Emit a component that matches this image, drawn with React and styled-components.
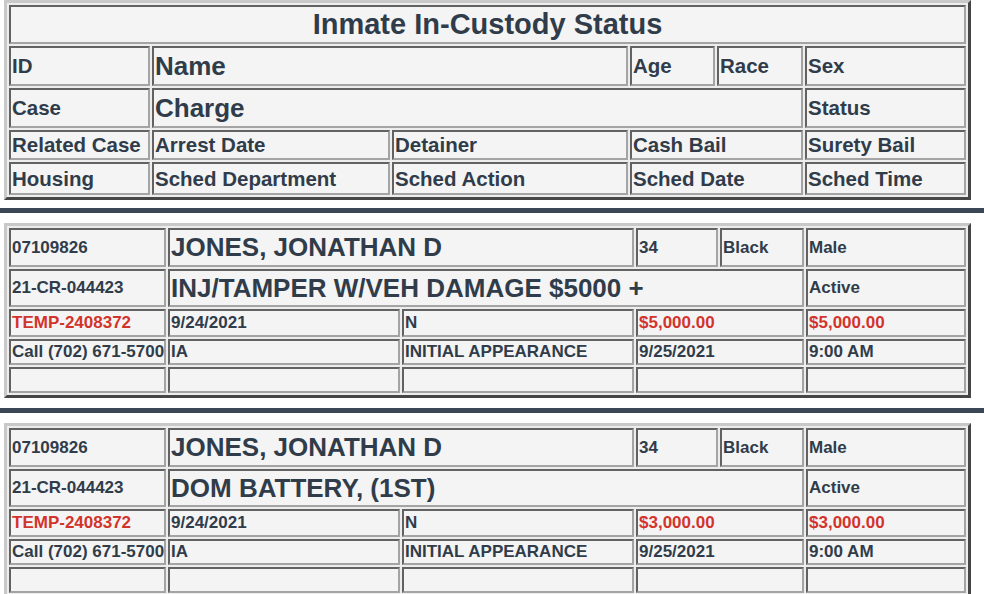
import React, { Fragment } from 'react';
import styled, { createGlobalStyle } from 'styled-components';

//global
const GlobalStyle = createGlobalStyle`
  html, body {
    margin: 0;
    padding: 0;
    background: #ffffff;
  }
  body {
    font-family: "Liberation Sans", Arial, Helvetica, sans-serif;
    color: #2f3b4a;
  }
`;

//layout
const Page = styled.div`
  width: 984px;
  overflow: hidden;
`;

const Panel = styled.div`
  display: grid;
  grid-template-columns: ${(p) => p.cols};
  grid-template-rows: ${(p) => p.rows};
  gap: 2px;
  width: 957px;
  margin-left: 4px;
  padding: 2px;
  border: 3px solid;
  border-color: #c9c9c9 #464646 #464646 #c9c9c9;
  background: #ededed;
`;

const Cell = styled.div`
  grid-column: span ${(p) => p.span || 1};
  display: flex;
  align-items: center;
  justify-content: ${(p) => (p.center ? 'center' : 'flex-start')};
  box-sizing: border-box;
  padding: 0 1px;
  border: 2px solid;
  border-color: #626262 #a4a4a4 #a4a4a4 #626262;
  background: #f4f4f4;
  color: ${(p) => (p.red ? '#d2342b' : '#303c4a')};
  font-weight: bold;
  font-size: ${(p) => p.size || 17}px;
  white-space: nowrap;
  overflow: hidden;
`;

const Divider = styled.div`
  height: 5px;
  background: #3c4755;
  margin: ${(p) => p.top}px 0 10px 0;
`;

const HEAD_COLS = '141px 238px 236px 85px 86px 161px';
const HEAD_ROWS = '39px 40px 40px 30px 33px';
const REC_COLS = '157px 232px 232px 82px 84px 160px';
const REC_ROWS = '39px 38px 28px 26px 26px';

const LABEL = 20.5;
const BIG = 26;

const records = [
  {
    id: '07109826',
    name: 'JONES, JONATHAN D',
    age: '34',
    race: 'Black',
    sex: 'Male',
    caseNo: '21-CR-044423',
    charge: 'INJ/TAMPER W/VEH DAMAGE $5000 +',
    status: 'Active',
    related: 'TEMP-2408372',
    arrest: '9/24/2021',
    detainer: 'N',
    cash: '$5,000.00',
    surety: '$5,000.00',
    housing: 'Call (702) 671-5700',
    dept: 'IA',
    action: 'INITIAL APPEARANCE',
    date: '9/25/2021',
    time: '9:00 AM',
  },
  {
    id: '07109826',
    name: 'JONES, JONATHAN D',
    age: '34',
    race: 'Black',
    sex: 'Male',
    caseNo: '21-CR-044423',
    charge: 'DOM BATTERY, (1ST)',
    status: 'Active',
    related: 'TEMP-2408372',
    arrest: '9/24/2021',
    detainer: 'N',
    cash: '$3,000.00',
    surety: '$3,000.00',
    housing: 'Call (702) 671-5700',
    dept: 'IA',
    action: 'INITIAL APPEARANCE',
    date: '9/25/2021',
    time: '9:00 AM',
  },
];

const HeaderPanel = () => (
  <Panel cols={HEAD_COLS} rows={HEAD_ROWS}>
    <Cell span={6} center size={29}>Inmate In-Custody Status</Cell>

    <Cell size={LABEL}>ID</Cell>
    <Cell span={2} size={BIG}>Name</Cell>
    <Cell size={LABEL}>Age</Cell>
    <Cell size={LABEL}>Race</Cell>
    <Cell size={LABEL}>Sex</Cell>

    <Cell size={LABEL}>Case</Cell>
    <Cell span={4} size={BIG}>Charge</Cell>
    <Cell size={LABEL}>Status</Cell>

    <Cell size={LABEL}>Related Case</Cell>
    <Cell size={LABEL}>Arrest Date</Cell>
    <Cell size={LABEL}>Detainer</Cell>
    <Cell span={2} size={LABEL}>Cash Bail</Cell>
    <Cell size={LABEL}>Surety Bail</Cell>

    <Cell size={LABEL}>Housing</Cell>
    <Cell size={LABEL}>Sched Department</Cell>
    <Cell size={LABEL}>Sched Action</Cell>
    <Cell span={2} size={LABEL}>Sched Date</Cell>
    <Cell size={LABEL}>Sched Time</Cell>
  </Panel>
);

const RecordPanel = ({ item }) => (
  <Panel cols={REC_COLS} rows={REC_ROWS}>
    <Cell>{item.id}</Cell>
    <Cell span={2} size={BIG}>{item.name}</Cell>
    <Cell>{item.age}</Cell>
    <Cell>{item.race}</Cell>
    <Cell>{item.sex}</Cell>

    <Cell>{item.caseNo}</Cell>
    <Cell span={4} size={BIG}>{item.charge}</Cell>
    <Cell>{item.status}</Cell>

    <Cell red>{item.related}</Cell>
    <Cell>{item.arrest}</Cell>
    <Cell>{item.detainer}</Cell>
    <Cell span={2} red>{item.cash}</Cell>
    <Cell red>{item.surety}</Cell>

    <Cell>{item.housing}</Cell>
    <Cell>{item.dept}</Cell>
    <Cell>{item.action}</Cell>
    <Cell span={2}>{item.date}</Cell>
    <Cell>{item.time}</Cell>

    <Cell />
    <Cell />
    <Cell />
    <Cell span={2} />
    <Cell />
  </Panel>
);

//main
export default function App() {
  return (
    <Page>
      <GlobalStyle />
      <HeaderPanel />
      {records.map((item, index) => (
        <Fragment key={index}>
          <Divider top={index === 0 ? 8 : 10} />
          <RecordPanel item={item} />
        </Fragment>
      ))}
    </Page>
  );
}
